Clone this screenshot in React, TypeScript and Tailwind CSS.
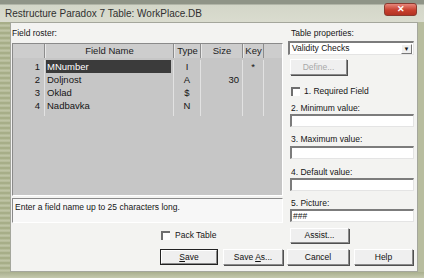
import React from 'react';

const btn =
  'flex items-center justify-center bg-[#efefef] border border-t-white border-l-white border-r-[#8a8a8a] border-b-[#8a8a8a] shadow-[1px_1px_0_#505050] text-[#111]';

const sunken =
  'bg-white border-t-[2px] border-l-[2px] border-r border-b border-t-[#7c7c7c] border-l-[#7c7c7c] border-r-[#e4e4e4] border-b-[#e4e4e4]';

const fields = [
  { n: 1, name: 'MNumber', type: 'I', size: '', key: '*' },
  { n: 2, name: 'Doljnost', type: 'A', size: '30', key: '' },
  { n: 3, name: 'Oklad', type: '$', size: '', key: '' },
  { n: 4, name: 'Nadbavka', type: 'N', size: '', key: '' },
];

const Check = () => (
  <span className="inline-block w-[9px] h-[9px] border-t-[2px] border-l-[2px] border-[#6f6f6f] border-r-0 border-b-0 bg-white" />
);

const Label = ({ children, className = '' }: { children: React.ReactNode; className?: string }) => (
  <div className={`h-[10px] leading-[10px] pl-[3px] ${className}`}>{children}</div>
);

export default function App() {
  return (
    <div className="w-[424px] h-[278px] overflow-hidden flex flex-col bg-[#b4ba9a] font-['Liberation_Sans',Arial,sans-serif] text-[8.5px] text-[#151515]">
      {/* title bar */}
      <div className="h-[22px] flex items-start bg-[linear-gradient(#8f9487_0px,#8f9487_4px,#d3d6c8_5px,#dadccf_100%)]">
        <div className="mt-[8px] ml-[5px] text-[10px] leading-[11px] text-[#303030]">
          Restructure Paradox 7 Table: WorkPlace.DB
        </div>
        <div className="ml-auto mr-[7px] mt-[3px] w-[33px] h-[13px] rounded-[3px] bg-[linear-gradient(#e7877b,#c8402f_55%,#b33222)] border border-[#8a3a30] flex items-center justify-center text-white text-[9px] font-bold leading-none">
          ✕
        </div>
      </div>

      <div className="flex-1 flex">
        <div className="w-[10px] bg-[repeating-linear-gradient(#a7ae88_0px,#a7ae88_2px,#c2c7a9_3px,#b3b997_5px)]" />
        {/* client */}
        <div className="flex-1 bg-[#f3f3f1] border border-[#a4a69c] pl-[1px] flex flex-col">
          <div className="flex gap-[5px]">
            {/* left column */}
            <div className="w-[271px] flex flex-col">
              <div className="mt-[5px] h-[11px] leading-[11px]">Field roster:</div>
              <div className="mt-[4px] h-[153px] bg-[#c6c6c6] border-t border-l border-t-[#8a8a8a] border-l-[#8a8a8a] border-r border-b border-r-white border-b-white flex flex-col text-[9.5px]">
                <div className="flex h-[14px] bg-[#cdcdcd] text-[#222]">
                  <div className="w-[32px] border-r border-[#8c8c8c]" />
                  <div className="w-[129px] border-r border-[#8c8c8c] border-l border-l-[#e8e8e8] flex items-center justify-center">Field Name</div>
                  <div className="w-[27px] border-r border-[#8c8c8c] border-l border-l-[#e8e8e8] flex items-center justify-center">Type</div>
                  <div className="w-[42px] border-r border-[#8c8c8c] border-l border-l-[#e8e8e8] flex items-center justify-center">Size</div>
                  <div className="w-[21px] border-r border-[#8c8c8c] border-l border-l-[#e8e8e8] flex items-center justify-center">Key</div>
                </div>
                <div className="flex flex-col pt-[2px]">
                  {fields.map((f, i) => (
                    <div key={f.n} className="flex h-[13px] leading-[13px]">
                      <div className="w-[32px] text-right pr-[4px] border-r border-[#e2e2e2]">{f.n}</div>
                      <div className="w-[129px] border-r border-[#e2e2e2] pl-[1px] pr-[2px]">
                        <div className={i === 0 ? 'bg-[#3b3b3b] text-white pl-[1px]' : 'pl-[1px]'}>{f.name}</div>
                      </div>
                      <div className="w-[27px] border-r border-[#e2e2e2] text-center">{f.type}</div>
                      <div className="w-[42px] border-r border-[#e2e2e2] text-right pr-[3px]">{f.size}</div>
                      <div className="w-[21px] border-r border-[#e2e2e2] text-center">{f.key}</div>
                    </div>
                  ))}
                  <div className="flex h-[4px]">
                    <div className="w-[32px] border-r border-[#e2e2e2]" />
                    <div className="w-[129px] border-r border-[#e2e2e2]" />
                    <div className="w-[27px] border-r border-[#e2e2e2]" />
                    <div className="w-[42px] border-r border-[#e2e2e2]" />
                    <div className="w-[21px] border-r border-[#e2e2e2]" />
                  </div>
                </div>
              </div>
              <div className="mt-[2px] h-[25px] bg-[#f7f7f7] border border-t-[#8a8a8a] border-l-[#8a8a8a] border-r-white border-b-white px-[2px] pt-[3px] leading-[10px]">
                Enter a field name up to 25 characters long.
              </div>
            </div>

            {/* right column */}
            <div className="w-[126px] flex flex-col">
              <Label className="mt-[5px] h-[11px] leading-[11px]">Table properties:</Label>
              <div className={`mt-[2px] h-[14px] flex items-center ${sunken}`}>
                <span className="flex-1 pl-[2px]">Validity Checks</span>
                <span className="w-[11px] h-[10px] mr-[1px] bg-[#efefef] border border-t-white border-l-white border-r-[#777] border-b-[#777] flex items-center justify-center text-[6px] leading-none">▼</span>
              </div>
              <div className={`mt-[4px] ml-[2px] w-[57px] h-[16px] ${btn} text-[#a8a8a8]`}>Define...</div>
              <div className="mt-[11px] ml-[3px] h-[10px] flex items-center gap-[4px]">
                <Check />
                <span>1. Required Field</span>
              </div>
              <Label className="mt-[7px]">2. Minimum value:</Label>
              <div className={`mt-[1px] ml-[2px] h-[13px] ${sunken}`} />
              <Label className="mt-[7px]">3. Maximum value:</Label>
              <div className={`mt-[2px] ml-[2px] h-[13px] ${sunken}`} />
              <Label className="mt-[8px]">4. Default value:</Label>
              <div className={`mt-[1px] ml-[2px] h-[13px] ${sunken}`} />
              <Label className="mt-[7px]">5. Picture:</Label>
              <div className={`mt-[1px] ml-[2px] h-[13px] ${sunken} pl-[1px] leading-[10px]`}>###</div>
            </div>
          </div>

          {/* pack table / assist */}
          <div className="mt-[5px] h-[15px] flex">
            <div className="w-[271px] pl-[149px] flex items-center gap-[5px]">
              <Check />
              <span>Pack Table</span>
            </div>
            <div className={`ml-[7px] w-[59px] h-[15px] ${btn}`}>Assist...</div>
          </div>

          {/* buttons */}
          <div className="mt-[6px] h-[16px] flex">
            <div className="ml-[148px] w-[58px] h-[16px] border border-[#222] flex">
              <div className={`flex-1 ${btn} shadow-none`}>
                <span><span className="underline">S</span>ave</span>
              </div>
            </div>
            <div className={`ml-[5px] w-[60px] h-[16px] ${btn}`}>
              <span>Save <span className="underline">A</span>s...</span>
            </div>
            <div className={`ml-[4px] w-[62px] h-[16px] ${btn}`}>Cancel</div>
            <div className={`ml-[5px] w-[59px] h-[16px] ${btn}`}>Help</div>
          </div>
        </div>
        <div className="w-[6px] bg-[#b8bd9f]" />
      </div>
      <div className="h-[6px] bg-[linear-gradient(#a9af8e,#c5c9ae)]" />
    </div>
  );
}
